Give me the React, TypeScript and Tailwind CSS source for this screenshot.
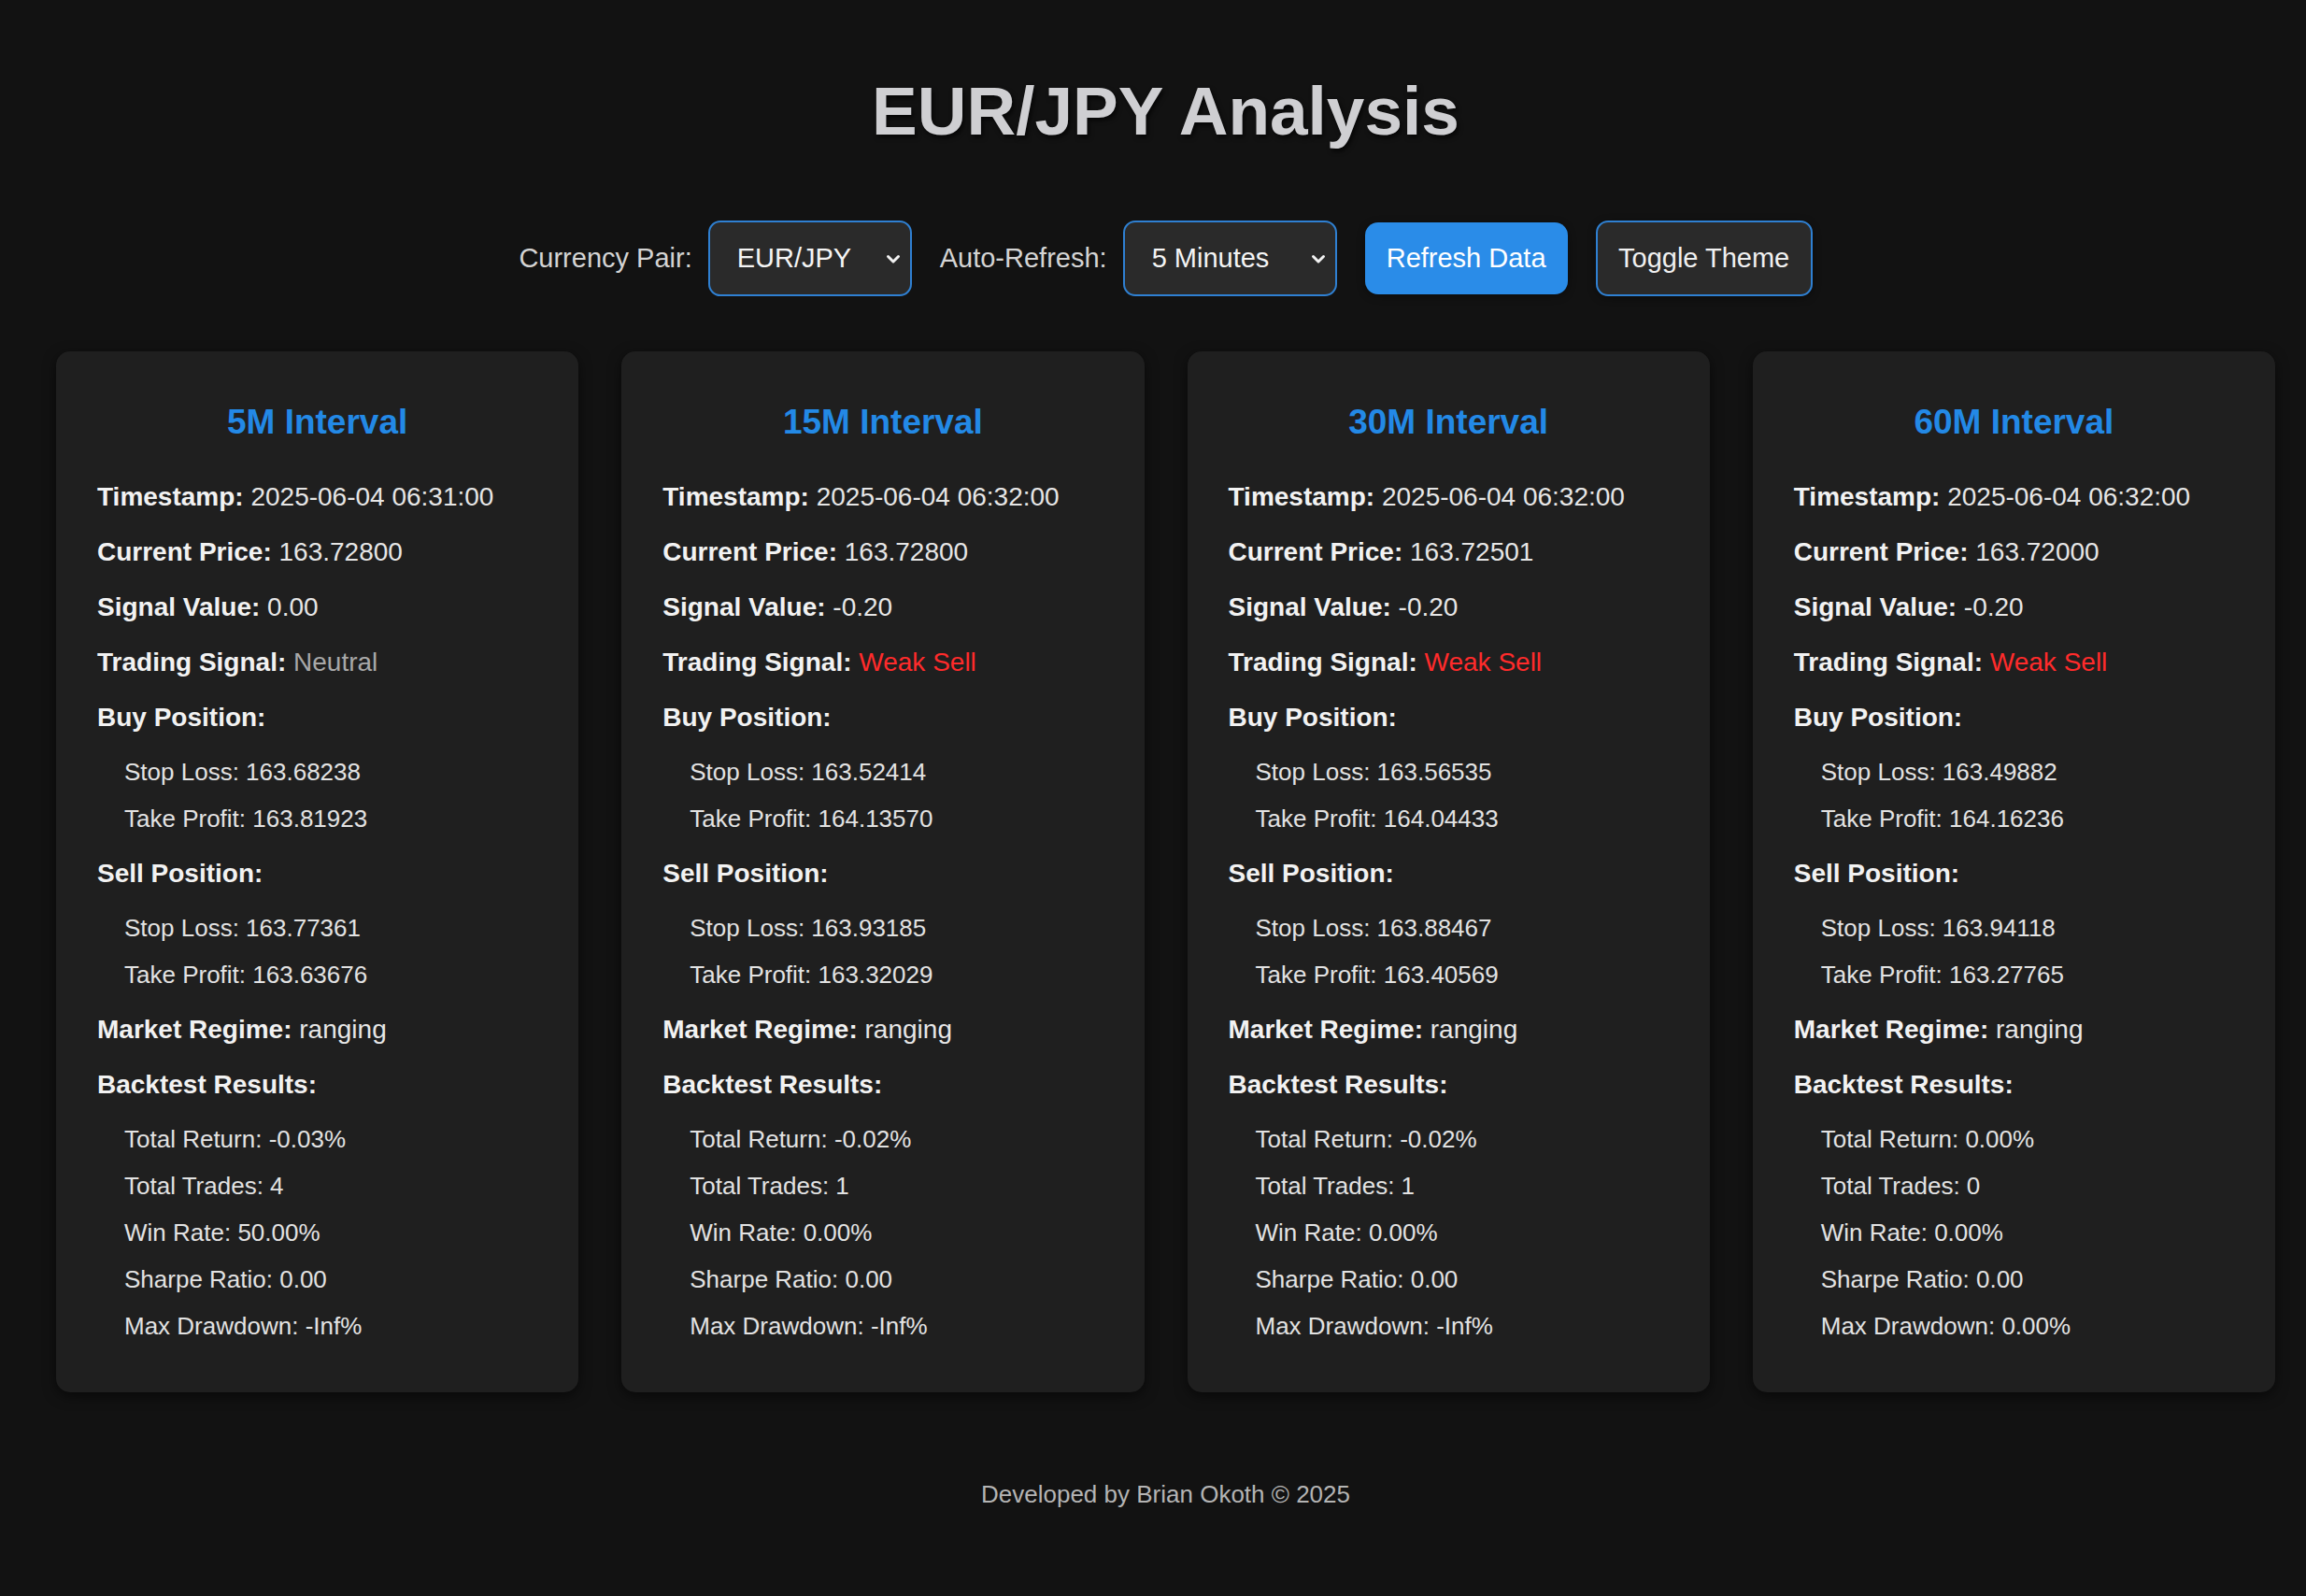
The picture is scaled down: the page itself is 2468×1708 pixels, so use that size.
import { useState } from "react";

type Interval = {
  label: string;
  timestamp: string;
  price: string;
  signalValue: string;
  signal: "Neutral" | "Weak Sell";
  buy: [string, string];
  sell: [string, string];
  regime: string;
  backtest: { totalReturn: string; trades: string; winRate: string; sharpe: string; drawdown: string };
};

const intervals: Interval[] = [
  {
    label: "5M Interval",
    timestamp: "2025-06-04 06:31:00",
    price: "163.72800",
    signalValue: "0.00",
    signal: "Neutral",
    buy: ["163.68238", "163.81923"],
    sell: ["163.77361", "163.63676"],
    regime: "ranging",
    backtest: { totalReturn: "-0.03%", trades: "4", winRate: "50.00%", sharpe: "0.00", drawdown: "-Inf%" },
  },
  {
    label: "15M Interval",
    timestamp: "2025-06-04 06:32:00",
    price: "163.72800",
    signalValue: "-0.20",
    signal: "Weak Sell",
    buy: ["163.52414", "164.13570"],
    sell: ["163.93185", "163.32029"],
    regime: "ranging",
    backtest: { totalReturn: "-0.02%", trades: "1", winRate: "0.00%", sharpe: "0.00", drawdown: "-Inf%" },
  },
  {
    label: "30M Interval",
    timestamp: "2025-06-04 06:32:00",
    price: "163.72501",
    signalValue: "-0.20",
    signal: "Weak Sell",
    buy: ["163.56535", "164.04433"],
    sell: ["163.88467", "163.40569"],
    regime: "ranging",
    backtest: { totalReturn: "-0.02%", trades: "1", winRate: "0.00%", sharpe: "0.00", drawdown: "-Inf%" },
  },
  {
    label: "60M Interval",
    timestamp: "2025-06-04 06:32:00",
    price: "163.72000",
    signalValue: "-0.20",
    signal: "Weak Sell",
    buy: ["163.49882", "164.16236"],
    sell: ["163.94118", "163.27765"],
    regime: "ranging",
    backtest: { totalReturn: "0.00%", trades: "0", winRate: "0.00%", sharpe: "0.00", drawdown: "0.00%" },
  },
];

const Chevron = () => (
  <svg
    className="pointer-events-none absolute right-[12px] top-1/2 -translate-y-1/2"
    width="16"
    height="11"
    viewBox="0 0 16 11"
    fill="none"
  >
    <path d="M2.5 3l5.5 5.5L13.5 3" stroke="#f2f2f2" strokeWidth="3" strokeLinecap="round" strokeLinejoin="round" />
  </svg>
);

const Row = ({ label, children }: { label: string; children: React.ReactNode }) => (
  <div className="leading-[32px] text-[#e6e6e6]">
    <span className="font-bold text-[#f2f2f2]">{label}:</span> {children}
  </div>
);

const SubList = ({ items }: { items: [string, string][] }) => (
  <div className="mt-[26px] flex flex-col gap-[18px] pl-[29px] text-[26px]">
    {items.map(([k, v]) => (
      <div key={k} className="leading-[32px] text-[#e2e2e2]">
        {k}: {v}
      </div>
    ))}
  </div>
);

const IntervalCard = ({ data }: { data: Interval }) => (
  <div className="rounded-[15px] bg-[#1f1f1f] px-[44px] pt-[55px] pb-[55px] shadow-[0_4px_14px_rgba(0,0,0,0.55)]">
    <h2 className="text-center text-[37px] font-bold leading-[41px] text-[#2389e6]">{data.label}</h2>
    <div className="mt-[44px] flex flex-col gap-[27px] text-[28px]">
      <Row label="Timestamp">{data.timestamp}</Row>
      <Row label="Current Price">{data.price}</Row>
      <Row label="Signal Value">{data.signalValue}</Row>
      <Row label="Trading Signal">
        <span className={data.signal === "Neutral" ? "text-[#a8a8a8]" : "text-[#ff2b2b]"}>{data.signal}</span>
      </Row>
      <div>
        <div className="font-bold leading-[32px] text-[#f2f2f2]">Buy Position:</div>
        <SubList items={[["Stop Loss", data.buy[0]], ["Take Profit", data.buy[1]]]} />
      </div>
      <div>
        <div className="font-bold leading-[32px] text-[#f2f2f2]">Sell Position:</div>
        <SubList items={[["Stop Loss", data.sell[0]], ["Take Profit", data.sell[1]]]} />
      </div>
      <Row label="Market Regime">{data.regime}</Row>
      <div>
        <div className="font-bold leading-[32px] text-[#f2f2f2]">Backtest Results:</div>
        <SubList
          items={[
            ["Total Return", data.backtest.totalReturn],
            ["Total Trades", data.backtest.trades],
            ["Win Rate", data.backtest.winRate],
            ["Sharpe Ratio", data.backtest.sharpe],
            ["Max Drawdown", data.backtest.drawdown],
          ]}
        />
      </div>
    </div>
  </div>
);

export default function App() {
  const [pair, setPair] = useState("EUR/JPY");
  const [refresh, setRefresh] = useState("5");

  return (
    <div className="min-h-screen bg-[#121212] pl-[60px] pr-[33px] pt-[77px] pb-[80px] font-['Liberation_Sans',Arial,sans-serif] text-[28px] text-[#e6e6e6]">
      <h1 className="text-center text-[73px] font-bold leading-[83px] text-[#cfcfd2] [text-shadow:2px_3px_5px_rgba(0,0,0,0.7)]">
        EUR/JPY Analysis
      </h1>

      <div className="mt-[76px] flex items-center justify-center text-[29px]">
        <label className="mr-[17px] text-[#d4d4d4]">Currency Pair:</label>
        <div className="relative mr-[30px]">
          <select
            value={pair}
            onChange={(e) => setPair(e.target.value)}
            className="h-[81px] w-[218px] appearance-none rounded-[13px] border-2 border-[#2f80d2] bg-[#2a2a2a] pl-[29px] text-[29px] text-[#f4f4f4] outline-none"
          >
            <option>EUR/JPY</option>
            <option>EUR/USD</option>
            <option>GBP/JPY</option>
          </select>
          <Chevron />
        </div>
        <label className="mr-[17px] text-[#d4d4d4]">Auto-Refresh:</label>
        <div className="relative mr-[30px]">
          <select
            value={refresh}
            onChange={(e) => setRefresh(e.target.value)}
            className="h-[81px] w-[229px] appearance-none rounded-[13px] border-2 border-[#2f80d2] bg-[#2a2a2a] pl-[29px] text-[29px] text-[#f4f4f4] outline-none"
          >
            <option value="1">1 Minute</option>
            <option value="5">5 Minutes</option>
            <option value="15">15 Minutes</option>
          </select>
          <Chevron />
        </div>
        <button className="mr-[30px] h-[77px] w-[217px] rounded-[14px] bg-[#2a8ce8] text-[29px] text-white shadow-[0_2px_8px_rgba(0,0,0,0.4)]">
          Refresh Data
        </button>
        <button className="h-[81px] w-[232px] rounded-[13px] border-2 border-[#2f80d2] bg-[#2a2a2a] text-[29px] text-[#f0f0f0] shadow-[0_2px_8px_rgba(0,0,0,0.4)]">
          Toggle Theme
        </button>
      </div>

      <div className="mt-[59px] grid grid-cols-4 gap-[46px]">
        {intervals.map((iv) => (
          <IntervalCard key={iv.label} data={iv} />
        ))}
      </div>

      <footer className="mt-[94px] text-center text-[26px] leading-[30px] text-[#b4b4b4]">
        Developed by Brian Okoth © 2025
      </footer>
    </div>
  );
}
